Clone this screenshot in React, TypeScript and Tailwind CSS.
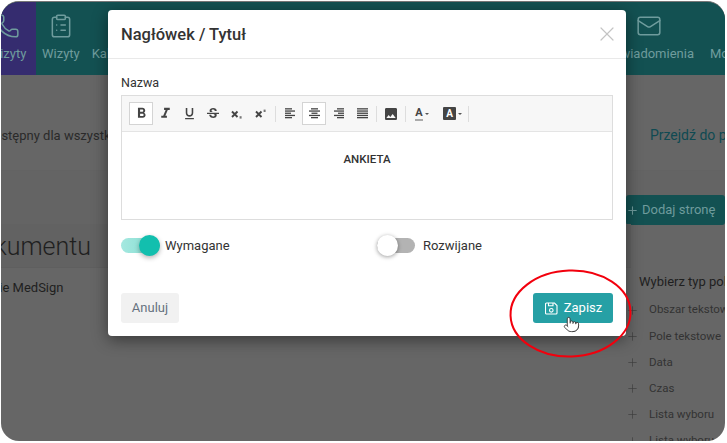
import React from "react";
import { ClipboardList, Mail, Phone, Plus, Pointer, X } from "lucide-react";
import { MdFormatBold, MdFormatItalic, MdFormatUnderlined, MdStrikethroughS, MdImage } from "react-icons/md";

const fieldTypes = ["Obszar tekstowy", "Pole tekstowe", "Data", "Czas", "Lista wyboru", "Lista wyboru"];

const ToolButton: React.FC<{ active?: boolean; children: React.ReactNode }> = ({ active, children }) => (
  <div
    className={`flex h-[23px] w-[24px] items-center justify-center text-[#444] ${
      active ? "border border-[#d4d4d4] bg-white" : ""
    }`}
  >
    {children}
  </div>
);

const Divider = () => <div className="mx-[2px] h-[16px] w-px bg-[#ddd]" />;

// linie wyrownania: [x, szerokosc] dla kazdego wiersza
const AlignIcon: React.FC<{ rows: number[][] }> = ({ rows }) => (
  <svg width="11" height="11" viewBox="0 0 11 11" fill="#444">
    {rows.map(([x, w], i) => (
      <rect key={i} x={x} y={i * 2.2 + 0.2} width={w} height="1.3" />
    ))}
  </svg>
);

const ScriptIcon: React.FC<{ sub?: boolean }> = ({ sub }) => (
  <svg width="12" height="12" viewBox="0 0 12 12" fill="none" stroke="#444" strokeWidth="1.9">
    <path d="M1 3.5l5.5 5.5M6.5 3.5L1 9" />
    <rect x="8.6" y={sub ? 8.2 : 1.6} width="2" height="2.4" fill="#777" stroke="none" />
  </svg>
);

const FloppyIcon = () => (
  <svg width="13" height="13" viewBox="0 0 13 13" fill="none" stroke="white" strokeWidth="1.1">
    <path d="M1.5 1h8l2.5 2.5V11a1 1 0 0 1-1 1H1.5a1 1 0 0 1-1-1V2a1 1 0 0 1 1-1z" />
    <path d="M3.5 1v2.8h4.5V1" />
    <circle cx="6.3" cy="8.3" r="1.8" />
  </svg>
);

const App: React.FC = () => {
  return (
    <div className="relative h-[443px] w-[727px] overflow-hidden bg-white font-['Roboto',sans-serif]">
      {/* Strona pod modalem, przyciemniona */}
      <div className="ml-px mr-[2px] mt-px flex h-[440px] flex-col overflow-hidden rounded-[18px] border-t border-[#777] bg-[#666]">
        <div className="flex h-[73px] shrink-0 justify-between bg-[#135152] text-[13px] text-[#6f9c9d]">
          <div className="flex">
            <div className="flex w-[35px] flex-col items-center justify-end overflow-hidden bg-[#352c6f] pb-[12px]">
              <Phone size={26} strokeWidth={1.4} className="mb-[5px] mr-[24px] shrink-0" />
              <span className="-ml-[22px]">Wizyty</span>
            </div>
            <div className="flex flex-col items-center justify-end pb-[12px] pl-[6px] pr-[7px]">
              <ClipboardList size={26} strokeWidth={1.4} className="mb-[5px]" />
              <span>Wizyty</span>
            </div>
            <div className="ml-[5px] flex flex-col justify-end pb-[12px]">
              <span>Kalendarz</span>
            </div>
          </div>
          <div className="-mr-[2px] flex gap-[16px]">
            <div className="flex flex-col items-center justify-end pb-[12px]">
              <Mail size={26} strokeWidth={1.4} className="mb-[5px]" />
              <span>Powiadomienia</span>
            </div>
            <div className="flex flex-col justify-end pb-[12px]">
              <span className="w-[17px] overflow-hidden whitespace-nowrap">Moje</span>
            </div>
          </div>
        </div>

        <div className="flex h-[96px] shrink-0 items-center justify-between whitespace-nowrap border-b border-[#636363] pt-[26px] text-[13px]">
          <span className="-ml-[77px] text-[#2a2a2a]">Dokument dostępny dla wszystkich</span>
          <span className="-mr-[52px] text-[14px] text-[#0f4a52]">Przejdź do podglądu</span>
        </div>

        <div className="flex h-[53px] shrink-0 items-start justify-end bg-[#646464] pt-[24px]">
          <div className="flex h-[30px] w-[99px] items-center gap-[3px] rounded-[3px] bg-[#135152] text-[13px] text-[#6f9c9d]">
            <Plus size={13} />
            <span>Dodaj stronę</span>
          </div>
        </div>

        <div className="flex min-h-0 flex-1 justify-between">
          <div className="flex flex-col">
            <div className="flex h-[44px] w-[630px] items-center border-b border-[#5f5f5f] bg-[#626262] pt-[2px]">
              <span className="-ml-[37px] text-[25px] font-light text-[#1f1f1f]">Dokumentu</span>
            </div>
            <span className="-ml-[56px] mt-[10px] whitespace-nowrap text-[13px] text-[#1f1f1f]">Podpisanie MedSign</span>
          </div>
          <div className="w-[95px] shrink-0 whitespace-nowrap pt-[46px]">
            <div className="-ml-[5px] h-[24px] pl-[13px] text-[13px] leading-[24px] text-[#1f1f1f]">Wybierz typ pola</div>
            <ul className="mt-[3px] flex flex-col text-[11.5px] text-[#333]">
              {fieldTypes.map((t, i) => (
                <li key={i} className="-ml-[5px] flex h-[26.2px] items-center gap-[10px]">
                  <Plus size={13} strokeWidth={1.2} className="shrink-0 text-[#3a3a3a]" />
                  <span>{t}</span>
                </li>
              ))}
            </ul>
          </div>
        </div>
      </div>

      {/* Modal */}
      <div className="absolute left-[108px] top-[10px] flex h-[326px] w-[518px] flex-col rounded-[4px] bg-white shadow-[0_4px_16px_rgba(0,0,0,0.45)]">
        <div className="flex h-[49px] shrink-0 items-center justify-between border-b border-[#e9e9e9] pl-[13px] pr-[7px] pt-[2px]">
          <h2 className="text-[16.5px] font-medium text-[#333]">Nagłówek / Tytuł</h2>
          <X size={24} strokeWidth={1.2} className="-mt-[2px] text-[#c4c4c4]" />
        </div>

        <div className="flex flex-1 flex-col px-[13px]">
          <label className="mt-[16px] h-[20px] text-[12.5px] leading-[16px] text-[#333] [font-weight:450]">Nazwa</label>

          <div className="h-[125px] border border-[#ddd]">
            <div className="flex h-[36px] items-center border-b border-[#e4e4e4] bg-[#f7f7f7] pl-[7px]">
              <ToolButton active>
                <MdFormatBold size={17} />
              </ToolButton>
              <ToolButton>
                <MdFormatItalic size={17} />
              </ToolButton>
              <ToolButton>
                <MdFormatUnderlined size={15} />
              </ToolButton>
              <ToolButton>
                <MdStrikethroughS size={16} />
              </ToolButton>
              <ToolButton>
                <ScriptIcon sub />
              </ToolButton>
              <ToolButton>
                <ScriptIcon />
              </ToolButton>
              <Divider />
              <ToolButton>
                <AlignIcon rows={[[0, 7], [0, 10], [0, 6], [0, 10], [0, 7]]} />
              </ToolButton>
              <ToolButton active>
                <AlignIcon rows={[[2, 7], [0, 11], [2.5, 6], [0, 11], [2, 7]]} />
              </ToolButton>
              <ToolButton>
                <AlignIcon rows={[[4, 7], [1, 10], [5, 6], [1, 10], [4, 7]]} />
              </ToolButton>
              <ToolButton>
                <AlignIcon rows={[[0, 11], [0, 11], [0, 11], [0, 11], [0, 11]]} />
              </ToolButton>
              <Divider />
              <ToolButton>
                <MdImage size={16} />
              </ToolButton>
              <Divider />
              <div className="flex h-[23px] w-[28px] items-center justify-center gap-[2px] text-[#444]">
                <span className="border-b-2 border-[#aaa] text-[11px] font-bold leading-[12px]">A</span>
                <span className="h-0 w-0 border-x-[2px] border-t-[2px] border-x-transparent border-t-[#555]" />
              </div>
              <div className="flex h-[23px] w-[30px] items-center gap-[2px] pl-[7px]">
                <span className="flex h-[13px] w-[13px] items-center justify-center rounded-[1px] bg-[#444] text-[10px] font-bold text-white">
                  A
                </span>
                <span className="h-0 w-0 border-x-[2px] border-t-[2px] border-x-transparent border-t-[#555]" />
              </div>
              <Divider />
            </div>
            <p className="pt-[19px] text-center text-[11.5px] font-medium text-[#333]">ANKIETA</p>
          </div>

          <div className="mt-[16px] grid h-[19px] grid-cols-2 text-[13px] text-[#333]">
            <div className="flex items-center gap-[5px]">
              <div className="relative h-[15px] w-[39px] rounded-full bg-gradient-to-r from-[#a5e8e0] to-[#7fdccf]">
                <div className="absolute -top-[3px] right-0 h-[21px] w-[21px] rounded-full bg-[#12bfae] shadow-[0_2px_5px_rgba(0,0,0,0.3)]" />
              </div>
              <span>Wymagane</span>
            </div>
            <div className="flex items-center gap-[8px] pl-[10px]">
              <div className="relative h-[15px] w-[38px] rounded-full bg-[#b3b3b3]">
                <div className="absolute -top-[3px] left-0 h-[21px] w-[21px] rounded-full bg-white shadow-[0_1px_4px_rgba(0,0,0,0.4)]" />
              </div>
              <span>Rozwijane</span>
            </div>
          </div>

          <div className="mt-[38px] flex justify-between">
            <button className="h-[30px] w-[58px] rounded-[3px] bg-[#f1f1f1] text-[13px] text-[#66727f]">Anuluj</button>
            <button className="flex h-[30px] w-[80px] items-center justify-center gap-[6px] rounded-[3px] bg-[#26a0a5] pl-px text-[13px] text-white">
              <FloppyIcon />
              Zapisz
            </button>
          </div>
        </div>
      </div>

      {/* Czerwona obwodka i kursor */}
      <svg className="absolute left-[505px] top-[266px]" width="132" height="96" viewBox="0 0 132 96" fill="none">
        <ellipse cx="65.5" cy="47.5" rx="60" ry="43" stroke="#f2000d" strokeWidth="2" transform="rotate(-2 65.5 47.5)" />
      </svg>
      <Pointer size={17} strokeWidth={1.3} className="absolute left-[563px] top-[316px] fill-white text-[#333]" />
    </div>
  );
};

export default App;
